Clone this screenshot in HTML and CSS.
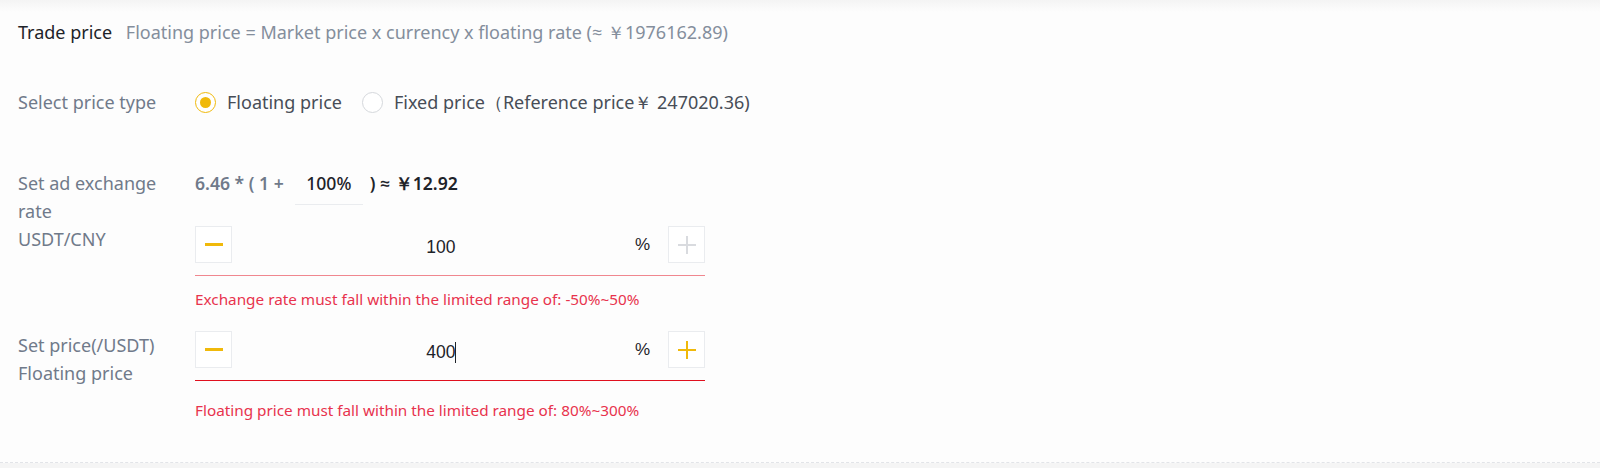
FILE: index.html
```html
<!DOCTYPE html>
<html>
<head>
<meta charset="utf-8">
<link rel="stylesheet" href="styles.css">
</head>
<body>
<div class="panel">
  <div class="top-shade"></div>
  <div class="trade">
    <span class="trade-title">Trade price</span>
    <span class="trade-desc">Floating price = Market price x currency x floating rate (≈ ￥1976162.89)</span>
  </div>

  <div class="row row-type">
    <div class="label">Select price type</div>
    <div class="content radios">
      <label class="radio checked"><span class="dot"></span><span class="radio-text">Floating price</span></label>
      <label class="radio"><span class="dot"></span><span class="radio-text">Fixed price（Reference price￥ 247020.36)</span></label>
    </div>
  </div>

  <div class="row row-rate">
    <div class="label">Set ad exchange rate<br>USDT/CNY</div>
    <div class="content">
      <div class="formula">
        <span class="f-gray">6.46 * ( 1 +</span>
        <span class="f-input">100%</span>
        <span class="f-dark">) ≈ ￥12.92</span>
      </div>
      <div class="stepper stepper-pink">
        <span class="step-btn minus"><span class="bar"></span></span>
        <span class="step-value">100</span>
        <span class="step-unit">%</span>
        <span class="step-btn plus disabled"><span class="bar"></span><span class="bar v"></span></span>
      </div>
      <div class="error err1">Exchange rate must fall within the limited range of: -50%~50%</div>
    </div>
  </div>

  <div class="row row-price">
    <div class="label">Set price(/USDT)<br>Floating price</div>
    <div class="content">
      <div class="stepper stepper-red">
        <span class="step-btn minus"><span class="bar"></span></span>
        <span class="step-value">400<span class="caret"></span></span>
        <span class="step-unit">%</span>
        <span class="step-btn plus"><span class="bar"></span><span class="bar v"></span></span>
      </div>
      <div class="error err2">Floating price must fall within the limited range of: 80%~300%</div>
    </div>
  </div>
</div>
<div class="footer-gray"></div>
</body>
</html>
```
FILE: styles.css
```css
html, body {
  margin: 0;
  padding: 0;
  background: #f5f5f5;
}
body {
  width: 1600px;
  height: 468px;
  overflow: hidden;
  font-family: "Noto Sans", "Open Sans", sans-serif;
  font-size: 18px;
  color: #1e2329;
}
.panel {
  background: #fdfdfd;
  height: 463px;
  border-bottom: 1px dashed #e2e4e8;
  box-sizing: border-box;
  padding-left: 18px;
  position: relative;
}
.top-shade {
  position: absolute;
  left: 0;
  top: 0;
  right: 0;
  height: 12px;
  background: linear-gradient(#f4f4f4, #fdfdfd);
}
.trade {
  padding-top: 20px;
  line-height: 24px;
  position: relative;
}
.trade-title {
  color: #1e2329;
  margin-right: 9px;
}
.trade-desc {
  color: #848e9c;
}
.row {
  display: flex;
  align-items: flex-start;
}
.label {
  width: 160px;
  flex: none;
  margin-right: 17px;
  color: #707a8a;
  line-height: 28px;
}
.content {
  width: 510px;
}
.row-type {
  margin-top: 44px;
}
.radios {
  display: flex;
  align-items: center;
  height: 28px;
  width: auto;
}
.radio {
  display: flex;
  align-items: center;
  margin-right: 20px;
  color: #474d57;
}
.dot {
  width: 19px;
  height: 19px;
  border-radius: 50%;
  border: 1px solid #d5d8dc;
  margin-right: 11px;
  display: flex;
  align-items: center;
  justify-content: center;
  background: #fff;
}
.radio.checked .dot {
  border-color: #f0b90b;
}
.radio.checked .dot::after {
  content: "";
  width: 11px;
  height: 11px;
  border-radius: 50%;
  background: #f0b90b;
}
.row-rate {
  margin-top: 53px;
}
.formula {
  display: flex;
  align-items: flex-start;
  line-height: 28px;
  font-weight: 600;
  font-size: 17.6px;
}
.f-gray {
  color: #707a8a;
}
.f-input {
  width: 68px;
  margin-left: 11px;
  margin-right: 7px;
  padding-bottom: 7px;
  border-bottom: 1px solid #eaecef;
  text-align: center;
  color: #1e2329;
  font-weight: 500;
}
.f-dark {
  color: #1e2329;
}
.stepper {
  display: flex;
  align-items: center;
  padding-bottom: 12px;
  margin-top: 21px;
}
.stepper-pink {
  border-bottom: 1px solid #f0878f;
}
.stepper-red {
  margin-top: 0;
  border-bottom: 1px solid #e0101e;
}
.step-btn {
  width: 35px;
  height: 35px;
  border: 1px solid #eaecef;
  flex: none;
  position: relative;
  background: #fff;
}
.bar {
  position: absolute;
  left: 9px;
  top: 16px;
  width: 18px;
  height: 3px;
  background: #f0b90b;
}
.plus .bar {
  height: 2px;
  top: 17px;
}
.plus .bar.v {
  width: 2px;
  height: 18px;
  top: 9px;
  left: 17px;
}
.plus.disabled .bar {
  background: #d9dbdf;
}
.step-value {
  flex: 1;
  text-align: center;
  font-family: "Liberation Sans", Arial, sans-serif;
  font-size: 17.5px;
  color: #1e2329;
  padding-left: 15px;
  padding-top: 6px;
  position: relative;
}
.caret {
  display: inline-block;
  width: 1px;
  height: 21px;
  background: #1e2329;
  vertical-align: -5px;
  margin-left: -1px;
}
.step-unit {
  font-family: "Liberation Sans", Arial, sans-serif;
  font-size: 17px;
  color: #1e2329;
  margin-right: 18px;
}
.error {
  color: #e8334d;
  font-size: 15.3px;
  line-height: 20px;
}
.err1 {
  margin-top: 13px;
}
.row-price {
  margin-top: 22px;
}
.err2 {
  margin-top: 19px;
}
.footer-gray {
  height: 5px;
  background: #f5f5f5;
}
```
